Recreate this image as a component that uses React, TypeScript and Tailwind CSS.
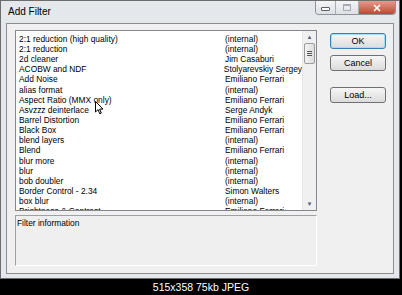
import { X } from "lucide-react";

const filters: [string, string][] = [
  ["2:1 reduction (high quality)", "(internal)"],
  ["2:1 reduction", "(internal)"],
  ["2d cleaner", "Jim Casaburi"],
  ["ACOBW and NDF", "Stolyarevskiy Sergey"],
  ["Add Noise", "Emiliano Ferrari"],
  ["alias format", "(internal)"],
  ["Aspect Ratio (MMX only)", "Emiliano Ferrari"],
  ["Asvzzz deinterlace", "Serge Andyk"],
  ["Barrel Distortion", "Emiliano Ferrari"],
  ["Black Box", "Emiliano Ferrari"],
  ["blend layers", "(internal)"],
  ["Blend", "Emiliano Ferrari"],
  ["blur more", "(internal)"],
  ["blur", "(internal)"],
  ["bob doubler", "(internal)"],
  ["Border Control - 2.34", "Simon Walters"],
  ["box blur", "(internal)"],
  ["Brightness & Contrast", "Emiliano Ferrari"],
];

function DlgButton({ label, primary }: { label: string; primary?: boolean }) {
  return (
    <button
      className={`h-[16px] w-[56px] rounded-[3px] border bg-gradient-to-b from-[#f6f6f6] to-[#dcdcdc] text-[9px] leading-none text-black ${
        primary ? "border-[#3c7fb1] shadow-[inset_0_0_0_1px_#9ee0f9]" : "border-[#707070]"
      }`}
    >
      {label}
    </button>
  );
}

function Cursor() {
  return (
    <svg className="absolute left-[79px] top-[70px]" width="9" height="14" viewBox="0 0 9 14">
      <path d="M0.5 0.5 L0.5 11 L3 8.6 L4.8 12.8 L6.3 12.1 L4.6 8.1 L8 8.1 Z" fill="white" stroke="black" strokeWidth="1" />
    </svg>
  );
}

export default function App() {
  return (
    <div
      className="flex h-[295px] w-[402px] flex-col bg-black"
      style={{ fontFamily: '"Liberation Sans", Arial, sans-serif' }}
    >
      <div className="flex h-[279px] w-[400px] flex-col border border-[#6d6d6d] bg-[#e4e7eb]">
        {/* title bar */}
        <div className="flex h-[22px] items-start justify-between pl-[7px] pr-[3px]">
          <span className="mt-[6px] text-[10px] leading-none text-black">Add Filter</span>
          <div className="flex h-[14px] overflow-hidden rounded-b-[4px] border border-t-0 border-[#8d9399]">
            <div className="flex w-[20px] items-center justify-center border-r border-[#a9aeb4] bg-gradient-to-b from-[#f4f5f7] to-[#dde0e4]">
              <div className="mt-[3px] h-[4px] w-[9px] rounded-[1px] border border-[#5b5f66] bg-white" />
            </div>
            <div className="flex w-[23px] items-center justify-center border-r border-[#a9aeb4] bg-gradient-to-b from-[#f4f5f7] to-[#dde0e4]">
              <div className="h-[7px] w-[8px] border border-[#a6abb1] border-t-2" />
            </div>
            <div className="flex w-[36px] items-center justify-center bg-gradient-to-b from-[#e49a8d] to-[#c24434]">
              <X size={10} strokeWidth={4} className="text-white" />
            </div>
          </div>
        </div>

        {/* client area */}
        <div className="mx-[5px] mb-[4px] flex flex-1 gap-[13px] border border-[#8e8e8e] bg-[#f0f0f0] pb-[7px] pl-[8px] pr-[6px] pt-[6px]">
          <div className="flex w-[302px] flex-col gap-[4px]">
            {/* list */}
            <div className="relative flex h-[181px] overflow-hidden border border-[#828790] bg-white">
              <div className="flex-1 overflow-hidden pl-[3px] pt-[3px] text-[8.4px] text-black">
                {filters.map(([name, author]) => (
                  <div key={name} className="flex h-[10.15px] items-center whitespace-nowrap leading-none">
                    <span className="w-[206px]">{name}</span>
                    <span>{author}</span>
                  </div>
                ))}
              </div>
              <div className="flex w-[14px] flex-col border-l border-[#e6e6e6] bg-[#f0f0f0]">
                <div className="flex h-[12px] items-center justify-center text-[6px] text-[#4d6185]">▲</div>
                <div className="mx-[1px] flex h-[21px] items-center justify-center rounded-[2px] border border-[#9b9b9b] bg-gradient-to-r from-[#f3f3f3] to-[#dedede]">
                  <div className="flex flex-col gap-[1px]">
                    <div className="h-[1px] w-[5px] bg-[#555]" />
                    <div className="h-[1px] w-[5px] bg-[#555]" />
                    <div className="h-[1px] w-[5px] bg-[#555]" />
                  </div>
                </div>
                <div className="flex-1" />
                <div className="flex h-[12px] items-center justify-center text-[6px] text-[#4d6185]">▼</div>
              </div>
              <Cursor />
            </div>
            {/* info */}
            <div className="h-[51px] border border-[#a0a0a0] border-r-white border-b-white bg-[#efefef] pl-[1px] pt-[3px] text-[8.4px] leading-none text-black">
              Filter information
            </div>
          </div>

          <div className="flex flex-col pt-[3px]">
            <DlgButton label="OK" primary />
            <div className="h-[6px]" />
            <DlgButton label="Cancel" />
            <div className="h-[16px]" />
            <DlgButton label="Load..." />
          </div>
        </div>
      </div>
      <div className="flex flex-1 items-center justify-center text-[10.5px] leading-none text-white">
        515x358 75kb JPEG
      </div>
    </div>
  );
}
